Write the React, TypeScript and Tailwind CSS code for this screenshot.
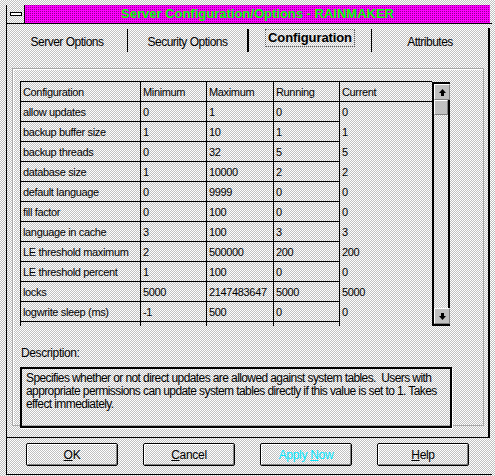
import React from "react";

const rows: string[][] = [
  ["allow updates", "0", "1", "0", "0"],
  ["backup buffer size", "1", "10", "1", "1"],
  ["backup threads", "0", "32", "5", "5"],
  ["database size", "1", "10000", "2", "2"],
  ["default language", "0", "9999", "0", "0"],
  ["fill factor", "0", "100", "0", "0"],
  ["language in cache", "3", "100", "3", "3"],
  ["LE threshold maximum", "2", "500000", "200", "200"],
  ["LE threshold percent", "1", "100", "0", "0"],
  ["locks", "5000", "2147483647", "5000", "5000"],
  ["logwrite sleep (ms)", "-1", "500", "0", "0"],
  ["", "", "", "", ""],
];

const widths = ["w-[120px]", "w-[66px]", "w-[67px]", "w-[66px]", "w-[93px]"];

function Cell({ text, col, header }: { text: string; col: number; header?: boolean }) {
  const last = col === 4;
  return (
    <div
      className={`${widths[col]} h-[20px] shrink-0 pl-[2px] leading-[21px] tracking-[-0.35px] whitespace-nowrap overflow-hidden ${
        last ? "" : "border-r border-black"
      } ${!last || header ? "border-b border-black" : ""}`}
    >
      {text}
    </div>
  );
}

function Arrow({ up }: { up?: boolean }) {
  return (
    <div className="w-[16px] h-[16px] bg-[#c0c0c0] border border-t-white border-l-white border-r-[#808080] border-b-[#808080] flex items-center justify-center">
      <svg width="9" height="9" viewBox="0 0 9 9" className={up ? "" : "rotate-180"}>
        <path d="M4.5 1 L8 5 L6 5 L6 8 L3 8 L3 5 L1 5 Z" fill="#000" />
      </svg>
    </div>
  );
}

function Btn({ pre, u, post, cyan }: { pre: string; u: string; post: string; cyan?: boolean }) {
  return (
    <button className="w-[92px] h-[23px] rounded-[2px] border border-black shadow-[inset_1px_1px_0_#fff,inset_-1px_-1px_0_#808080] bg-[repeating-conic-gradient(#c0c0c0_0_25%,#ffffff_0_50%)] bg-size-[2px_2px] flex items-center justify-center">
      <span className={`text-[12px] tracking-[-0.3px] ${cyan ? "text-[#00e8ff]" : "text-black"}`}>
        {pre}
        <span className="underline">{u}</span>
        {post}
      </span>
    </button>
  );
}

export default function App() {
  return (
    <div
      className="w-[495px] h-[476px] overflow-hidden bg-[repeating-conic-gradient(#c0c0c0_0_25%,#ffffff_0_50%)] bg-size-[2px_2px] pt-[5px] pl-[6px] text-black text-[11px]"
      style={{ fontFamily: '"Liberation Sans", Arial, sans-serif' }}
    >
      <div className="w-[486px] h-[470px] border-l border-[#909090] border-b border-black flex flex-col">
        {/* title bar */}
        <div className="h-[19px] shrink-0 flex border-b border-black">
          <div className="w-[18px] border-r border-black flex items-center justify-center">
            <div className="w-[12px] h-[4px] bg-white border border-black" />
          </div>
          <div className="flex-1 mr-[2px] flex items-center justify-center bg-[conic-gradient(#900090_0_25%,#ff00ff_0)] bg-size-[2px_2px]">
            <span className="text-[#00ff00] font-bold text-[13px] tracking-[0px]">
              Server Configuration/Options - RAINMAKER
            </span>
          </div>
        </div>

        {/* tabs */}
        <div className="h-[28px] shrink-0 flex">
          <div className="w-[121px] flex items-end">
            <div className="flex-1 h-[23px] flex items-center justify-center text-[12px] tracking-[-0.5px] pt-[2px]">Server Options</div>
            <div className="w-[1px] h-[23px] bg-black" />
          </div>
          <div className="w-[121px] flex items-end">
            <div className="flex-1 h-[23px] flex items-center justify-center text-[12px] tracking-[-0.5px] pt-[2px]">Security Options</div>
            <div className="w-[2px] h-[23px] bg-black" />
          </div>
          <div className="w-[123px] flex items-end">
            <div className="flex-1 h-[24px] flex items-start justify-center pt-[1px]">
              <span className="font-bold text-[13px] tracking-[-0.1px] px-[2px] border border-dotted border-[#606060] leading-[16px]">
                Configuration
              </span>
            </div>
            <div className="w-[1px] h-[23px] bg-black" />
          </div>
          <div className="flex-1 flex items-end">
            <div className="flex-1 h-[23px] flex items-center justify-center text-[12px] tracking-[-0.5px] pt-[2px]">Attributes</div>
            <div className="w-[2px] h-[24px] mr-[2px] bg-black" />
          </div>
        </div>

        {/* panel */}
        <div className="h-[386px] shrink-0 border-r-2 border-b border-black mr-[2px] pl-[5px] pt-[16px]">
          <div className="w-[472px] h-[358px] border border-[#a8a8a8] shadow-[inset_1px_1px_0_#fff] pl-[7px] pt-[12px]">
            <div className="flex">
              <div className="w-[412px] h-[245px] border-t border-l border-black overflow-hidden">
                <div className="flex">
                  {["Configuration", "Minimum", "Maximum", "Running", "Current"].map((h, i) => (
                    <Cell key={h} text={h} col={i} header />
                  ))}
                </div>
                {rows.map((r, ri) => (
                  <div key={ri} className="flex">
                    {r.map((c, ci) => (
                      <Cell key={ci} text={c} col={ci} />
                    ))}
                  </div>
                ))}
              </div>
              <div className="w-[18px] h-[244px] mt-[1px] border-2 border-black flex flex-col">
                <Arrow up />
                <div className="w-[14px] h-[15px] bg-[#c0c0c0] border border-t-white border-l-white border-r-[#808080] border-b-[#808080]" />
                <div className="flex-1" />
                <Arrow />
              </div>
            </div>

            <div className="mt-[18px] ml-[1px] text-[12px] tracking-[-0.4px]">Description:</div>
            <div className="mt-[5px] w-[432px] h-[61px] border-2 border-black shadow-[1px_1px_0_#fff] pl-[4px] pt-[3px] text-[12px] leading-[13px] tracking-[-0.6px]">
              Specifies whether or not direct updates are allowed against system tables.&nbsp; Users with appropriate
              permissions can update system tables directly if this value is set to 1. Takes effect immediately.
            </div>
          </div>
        </div>

        {/* buttons */}
        <div className="flex-1 flex items-start pt-[5px] pl-[19px] gap-[25px]">
          <Btn pre="" u="O" post="K" />
          <Btn pre="" u="C" post="ancel" />
          <Btn pre="Apply " u="N" post="ow" cyan />
          <Btn pre="" u="H" post="elp" />
        </div>
      </div>
    </div>
  );
}
